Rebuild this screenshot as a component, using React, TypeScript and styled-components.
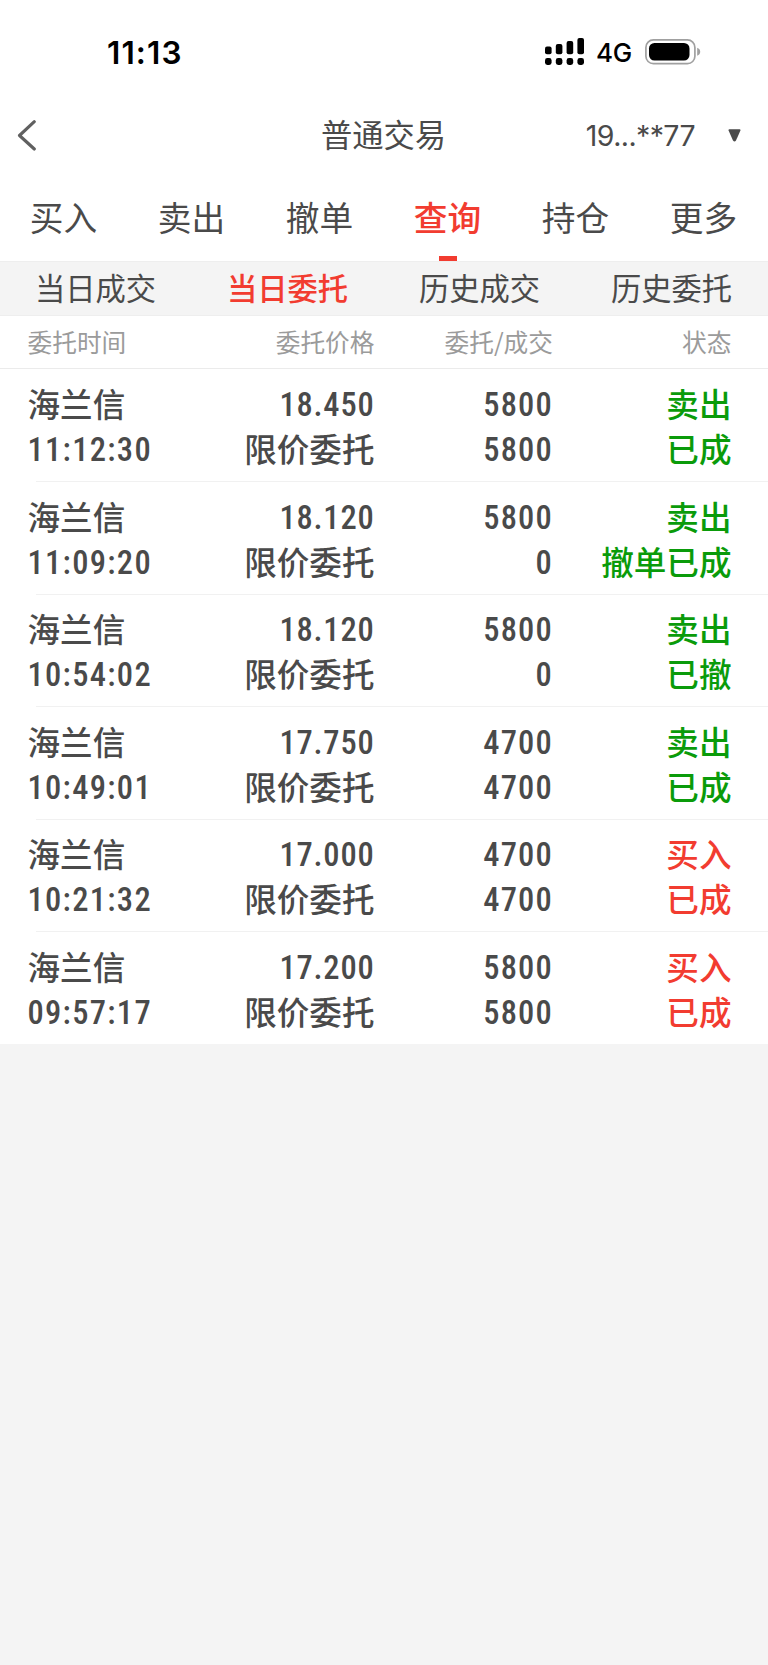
import React from "react";
import styled, { createGlobalStyle } from "styled-components";

const GlobalStyle = createGlobalStyle`
  *, *::before, *::after { box-sizing: border-box; }
  body {
    margin: 0;
    background: #f4f4f4;
    color: #4a4a4a;
    font-family: "Noto Sans CJK SC", sans-serif;
  }
`;

const Screen = styled.main`
  display: flex;
  flex-direction: column;
  width: 768px;
  min-height: 1665px;
  background: #f4f4f4;
`;

const StatusBar = styled.div`
  display: flex;
  align-items: center;
  justify-content: space-between;
  height: 104px;
  padding: 0 67px 0 107px;
  background: #fff;
  color: #000;
  font-family: Inter, sans-serif;
`;

const Clock = styled.time`
  font-size: 31.5px;
  font-weight: 600;
  letter-spacing: 1.1px;
`;

const Indicators = styled.div`
  display: flex;
  align-items: center;
`;

const Network = styled.span`
  width: 60px;
  padding: 2px 0 0 11px;
  font-size: 26px;
  font-weight: 450;
  line-height: 30px;
  letter-spacing: -0.3px;
`;

const NavBar = styled.header`
  display: grid;
  grid-template-columns: 1fr auto 1fr;
  align-items: center;
  height: 63px;
  background: #fff;
`;

const BackButton = styled.button`
  display: flex;
  width: 54px;
  padding: 0 0 0 17px;
  border: 0;
  background: none;
  color: #606060;
`;

const Title = styled.h1`
  margin: -3px 0 0;
  padding-right: 1px;
  font-size: 31.3px;
  font-weight: 400;
  line-height: 46px;
`;

const Account = styled.div`
  display: flex;
  align-items: center;
  justify-content: flex-end;
  gap: 33px;
  padding-right: 27px;
  font-family: Inter, sans-serif;
  font-size: 28.5px;
  line-height: 40px;
  letter-spacing: -0.6px;
`;

const MainTabs = styled.nav`
  display: grid;
  grid-template-columns: repeat(6, 1fr);
  height: 94px;
  background: #fff;
`;

const MainTab = styled.a<{ $active?: boolean }>`
  display: flex;
  flex-direction: column;
  align-items: center;
  justify-content: space-between;
  padding: 25px 1px 0 0;
  font-size: 33.7px;
  font-weight: ${(p) => (p.$active ? 500 : 400)};
  line-height: 50px;
  color: ${(p) => (p.$active ? "#f23c30" : "inherit")};

  &::after {
    content: "";
    width: 18px;
    height: 5px;
    background: ${(p) => (p.$active ? "#f23c30" : "transparent")};
  }
`;

const SubTabs = styled.nav`
  display: grid;
  grid-template-columns: repeat(4, 1fr);
  height: 55px;
  border-top: 1px solid #eee;
  border-bottom: 1px solid #eee;
`;

const SubTab = styled.a<{ $active?: boolean }>`
  padding-right: 1px;
  text-align: center;
  font-size: 30.3px;
  font-weight: ${(p) => (p.$active ? 500 : 400)};
  line-height: 50px;
  color: ${(p) => (p.$active ? "#f23c30" : "inherit")};
`;

const Columns = styled.div`
  display: grid;
  grid-template-columns: 173px 174px 178.5px 178.5px;
  align-content: start;
  padding-left: 27.5px;

  & > :not(:first-child) {
    text-align: right;
  }
`;

const TableHead = styled(Columns)`
  height: 53px;
  border-bottom: 1px solid #ebebeb;
  background: #fff;
  color: #9b9b9b;
  font-size: 24.7px;
  line-height: 50px;
`;

const OrderList = styled.div`
  background: #fff;
`;

const OrderRow = styled(Columns)`
  height: 112.5px;
  padding-top: 11px;
  font-size: 32.6px;
  font-weight: 500;
  line-height: 45px;
  white-space: nowrap;

  & + &::before {
    content: "";
    grid-column: 1 / -1;
    width: 732px;
    height: 1px;
    margin: -11.5px 0 10.5px 8.5px;
    background: #f1f1f1;
  }
`;

const Cell = styled.div`
  display: flex;
  flex-direction: column;
`;

const Digits = styled.span`
  height: 45px;
  padding-top: 3px;
  font-family: Roboto, sans-serif;
  font-size: 32.5px;
  font-weight: 460;
  font-stretch: 87%;
  letter-spacing: 1.2px;
`;

const Time = styled(Digits)`
  letter-spacing: 1.3px;
`;

const Price = styled(Digits)`
  letter-spacing: 0.8px;
`;

const Status = styled(Cell)<{ $side: Side }>`
  align-items: flex-end;
  color: ${(p) => (p.$side === "卖出" ? "#0a9b0a" : "#f23c30")};
`;

type Side = "卖出" | "买入";

interface Order {
  time: string;
  price: string;
  ordered: string;
  filled: string;
  side: Side;
  state: string;
}

const orders: Order[] = [
  { time: "11:12:30", price: "18.450", ordered: "5800", filled: "5800", side: "卖出", state: "已成" },
  { time: "11:09:20", price: "18.120", ordered: "5800", filled: "0", side: "卖出", state: "撤单已成" },
  { time: "10:54:02", price: "18.120", ordered: "5800", filled: "0", side: "卖出", state: "已撤" },
  { time: "10:49:01", price: "17.750", ordered: "4700", filled: "4700", side: "卖出", state: "已成" },
  { time: "10:21:32", price: "17.000", ordered: "4700", filled: "4700", side: "买入", state: "已成" },
  { time: "09:57:17", price: "17.200", ordered: "5800", filled: "5800", side: "买入", state: "已成" },
];

const SignalIcon = () => (
  <svg width="40" height="28" viewBox="0 0 40 28" fill="currentColor">
    {[8.5, 6, 3, 0].map((top, i) => (
      <g key={top}>
        <rect x={i * 10.8} y={top} width="6.6" height={16.3 - top} rx="2" />
        <rect x={i * 10.8} y="20" width="6.6" height="7" rx="2.4" />
      </g>
    ))}
  </svg>
);

const BatteryIcon = () => (
  <svg width="56" height="26" viewBox="0 0 56 26">
    <rect x="0.9" y="0.9" width="49" height="23.8" rx="7.5" fill="none" stroke="#a0a0a0" strokeWidth="1.7" />
    <rect x="4" y="4" width="40.5" height="17.6" rx="5.5" fill="#000" />
    <path d="M52.2 8.8c4 1.2 4 6.8 0 8z" fill="#a0a0a0" />
  </svg>
);

const BackIcon = () => (
  <svg width="20" height="32" viewBox="0 0 20 32" fill="none" stroke="currentColor" strokeWidth="3.1" strokeLinecap="round" strokeLinejoin="round">
    <path d="M17.3 1.7L2.5 15.5l14.8 13.5" />
  </svg>
);

const CaretIcon = () => (
  <svg width="13" height="13" viewBox="0 0 13 13" fill="#4a4a4a">
    <path d="M1.4.3h10.2q1.2 0 .8 1.3L8 11.4q-1.5 2.2-3 0L.6 1.6Q.2.3 1.4.3z" />
  </svg>
);

export default function App() {
  return (
    <Screen>
      <GlobalStyle />
      <StatusBar>
        <Clock>11:13</Clock>
        <Indicators>
          <SignalIcon />
          <Network>4G</Network>
          <BatteryIcon />
        </Indicators>
      </StatusBar>
      <NavBar>
        <BackButton aria-label="返回">
          <BackIcon />
        </BackButton>
        <Title>普通交易</Title>
        <Account>
          <span>19...**77</span>
          <CaretIcon />
        </Account>
      </NavBar>
      <MainTabs>
        {["买入", "卖出", "撤单", "查询", "持仓", "更多"].map((label) => (
          <MainTab key={label} $active={label === "查询"}>
            {label}
          </MainTab>
        ))}
      </MainTabs>
      <SubTabs>
        {["当日成交", "当日委托", "历史成交", "历史委托"].map((label) => (
          <SubTab key={label} $active={label === "当日委托"}>
            {label}
          </SubTab>
        ))}
      </SubTabs>
      <TableHead>
        {["委托时间", "委托价格", "委托/成交", "状态"].map((label) => (
          <span key={label}>{label}</span>
        ))}
      </TableHead>
      <OrderList>
        {orders.map((order) => (
          <OrderRow key={order.time}>
            <Cell>
              <span>海兰信</span>
              <Time>{order.time}</Time>
            </Cell>
            <Cell>
              <Price>{order.price}</Price>
              <span>限价委托</span>
            </Cell>
            <Cell>
              <Digits>{order.ordered}</Digits>
              <Digits>{order.filled}</Digits>
            </Cell>
            <Status $side={order.side}>
              <span>{order.side}</span>
              <span>{order.state}</span>
            </Status>
          </OrderRow>
        ))}
      </OrderList>
    </Screen>
  );
}
